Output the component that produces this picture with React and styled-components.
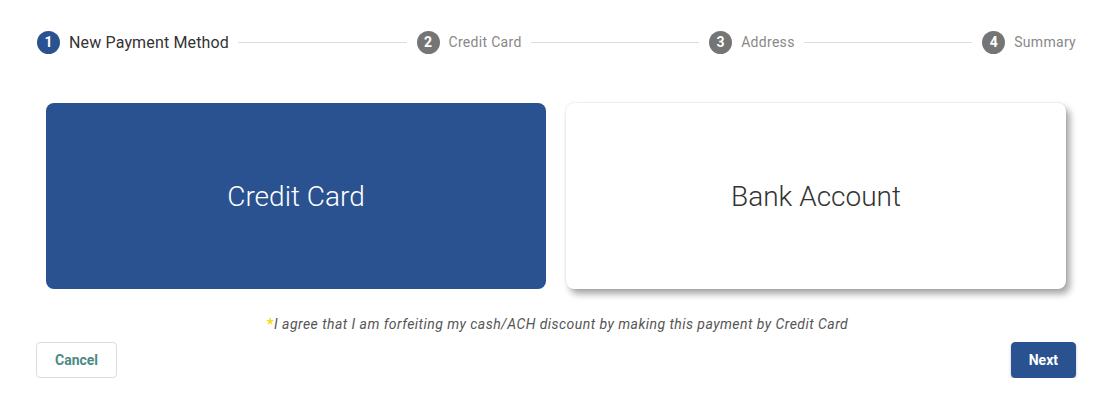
import React, { useState } from "react";
import styled, { createGlobalStyle } from "styled-components";

const GlobalStyle = createGlobalStyle`
  body {
    margin: 0;
    background: #fff;
    font-family: Roboto, "Liberation Sans", Arial, sans-serif;
  }
`;

const steps = ["New Payment Method", "Credit Card", "Address", "Summary"];

const Page = styled.div`
  padding: 30px 39px 0 36px;
`;

const Stepper = styled.div`
  display: flex;
  align-items: center;
  height: 24px;
`;

const Step = styled.div`
  display: flex;
  align-items: center;
  gap: 9px;
  padding-left: 1px;
`;

const Circle = styled.span`
  width: 23px;
  height: 23px;
  border-radius: 50%;
  background: ${p => (p.active ? "#2a5290" : "#757575")};
  color: #fff;
  font-size: 14px;
  font-weight: 700;
  display: flex;
  align-items: center;
  justify-content: center;
`;

const StepLabel = styled.span`
  font-size: ${p => (p.active ? "16px" : "14px")};
  color: ${p => (p.active ? "#333" : "#888")};
  letter-spacing: ${p => (p.active ? "0.15px" : "0.3px")};
`;

const Line = styled.div`
  flex: 1;
  height: 1px;
  background: #dcdcdc;
  margin: 0 9px;
`;

const Cards = styled.div`
  display: grid;
  grid-template-columns: 1fr 1fr;
  gap: 20px;
  margin: 49px 10px 0 10px;
`;

const Card = styled.button`
  height: 186px;
  border: none;
  border-radius: 8px;
  font-family: Roboto, "Liberation Sans", Arial, sans-serif;
  font-size: 28px;
  font-weight: 300;
  cursor: pointer;
  background: ${p => (p.selected ? "#2a5290" : "#fff")};
  color: ${p => (p.selected ? "#fff" : "#333")};
  box-shadow: ${p =>
    p.selected ? "none" : "4px 5px 7px rgba(0,0,0,0.35), 0 0 2px rgba(0,0,0,0.15)"};
`;

const Disclaimer = styled.p`
  margin: 26px 0 0 0;
  text-align: center;
  font-style: italic;
  font-size: 14px;
  letter-spacing: 0.45px;
  color: #555;
  padding-left: 3px;
`;

const Star = styled.span`
  color: #f5d90a;
  font-style: normal;
  font-weight: 700;
  font-size: 15px;
`;

const Actions = styled.div`
  display: flex;
  justify-content: space-between;
  margin-top: 9px;
`;

const Button = styled.button`
  height: 36px;
  padding: 0 ${p => (p.primary ? "17px" : "18px")};
  border-radius: 4px;
  font-family: Roboto, "Liberation Sans", Arial, sans-serif;
  font-size: 14px;
  font-weight: 700;
  cursor: pointer;
  border: 1px solid ${p => (p.primary ? "#2a5290" : "#dcdcdc")};
  background: ${p => (p.primary ? "#2a5290" : "#fff")};
  color: ${p => (p.primary ? "#fff" : "#4b8a86")};
  box-shadow: ${p => (p.primary ? "0 2px 3px rgba(0,0,0,0.25)" : "none")};
`;

export default function App() {
  const [method, setMethod] = useState("credit");
  return (
    <Page>
      <GlobalStyle />
      <Stepper>
        {steps.map((s, i) => (
          <React.Fragment key={s}>
            {i > 0 && <Line />}
            <Step>
              <Circle active={i === 0}>{i + 1}</Circle>
              <StepLabel active={i === 0}>{s}</StepLabel>
            </Step>
          </React.Fragment>
        ))}
      </Stepper>
      <Cards>
        <Card selected={method === "credit"} onClick={() => setMethod("credit")}>
          Credit Card
        </Card>
        <Card selected={method === "bank"} onClick={() => setMethod("bank")}>
          Bank Account
        </Card>
      </Cards>
      <Disclaimer>
        <Star>*</Star>I agree that I am forfeiting my cash/ACH discount by making this
        payment by Credit Card
      </Disclaimer>
      <Actions>
        <Button>Cancel</Button>
        <Button primary>Next</Button>
      </Actions>
    </Page>
  );
}
